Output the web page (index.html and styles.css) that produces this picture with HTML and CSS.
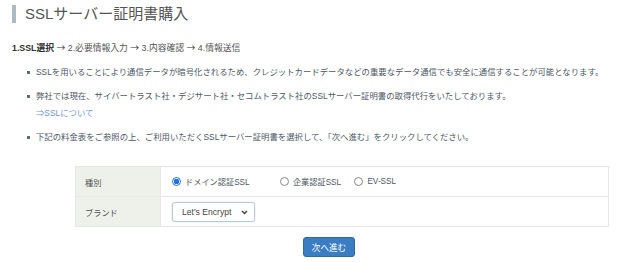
FILE: index.html
```html
<!DOCTYPE html>
<html lang="ja">
<head>
<meta charset="UTF-8">
<title>SSLサーバー証明書購入</title>
<link rel="stylesheet" href="styles.css">
</head>
<body>
<div id="wrap">
    <h1 class="ttl">SSLサーバー証明書購入</h1>
    <p class="steps"><b>1.SSL選択</b> <span class="arr">→</span> 2.必要情報入力 <span class="arr">→</span> 3.内容確認 <span class="arr">→</span> 4.情報送信</p>
    <ul class="notes">
        <li>SSLを用いることにより通信データが暗号化されるため、クレジットカードデータなどの重要なデータ通信でも安全に通信することが可能となります。</li>
        <li>弊社では現在、サイバートラスト社・デジサート社・セコムトラスト社のSSLサーバー証明書の取得代行をいたしております。<br><a href="#">⇒SSLについて</a></li>
        <li>下記の料金表をご参照の上、ご利用いただくSSLサーバー証明書を選択して、「次へ進む」をクリックしてください。</li>
    </ul>
    <table class="form">
        <tr>
            <th>種別</th>
            <td>
                <label class="rd"><input type="radio" name="kind" checked><span class="mark"></span>ドメイン認証SSL</label>
                <label class="rd"><input type="radio" name="kind"><span class="mark"></span>企業認証SSL</label>
                <label class="rd"><input type="radio" name="kind"><span class="mark"></span>EV-SSL</label>
            </td>
        </tr>
        <tr>
            <th>ブランド</th>
            <td>
                <span class="sel">
                    <select>
                        <option>Let's Encrypt</option>
                    </select>
                    <svg class="chev" width="7" height="5" viewBox="0 0 7 5"><path d="M1 1 L3.5 3.5 L6 1" fill="none" stroke="#444" stroke-width="1.4"/></svg>
                </span>
            </td>
        </tr>
    </table>
    <div class="actions">
        <button class="btn" type="button">次へ進む</button>
    </div>
</div>
</body>
</html>
```
FILE: styles.css
```css
body{margin:0; font-family:"Liberation Sans","Noto Sans CJK JP",sans-serif; color:#4d5866; background:#fff;}
#wrap{padding:5px 0 0 12px;}
.ttl{margin:0; height:18px; line-height:18px; border-left:4px solid #a8bcc2; padding-left:9px; font-size:15px; font-weight:normal; color:#555;}
.steps{margin:18px 0 0 0; font-size:8.8px; line-height:14px; color:#555;}
.steps b{color:#333;}
.steps .arr{font-family:"Noto Sans CJK JP",sans-serif; color:#333;}
.notes{list-style:none; margin:9px 0 0 0; padding:0 0 0 24px; font-size:8.4px; line-height:17px;}
.notes li{position:relative; margin-bottom:7px;}
.notes li::before{content:""; position:absolute; left:-9px; top:7px; width:3px; height:3px; background:#5b6a80;}
.notes a{color:#6a98d6; text-decoration:none;}
.form{margin:20px 0 0 63px; width:534px; border-collapse:collapse; font-size:8.2px;}
.form th,.form td{border:1px solid #e6e8e6; height:29px; padding:0; vertical-align:middle;}
.form tr{height:30px;}
.form th{width:75px; padding-left:9px; text-align:left; font-weight:normal; background:#eef0ea; color:#555;}
.form td{padding-left:11px;}
.rd{display:inline-flex; align-items:center; margin-right:11px; color:#4d5866;}
.rd:first-child{margin-right:28px;}
.rd input{display:none;}
.rd .mark{width:7px; height:7px; border:1px solid #888; border-radius:50%; margin-right:4px; box-sizing:content-box;}
.rd input:checked + .mark{border-color:#1a73e8; background:radial-gradient(circle,#1a73e8 0 2.6px,#fff 3px);}
.sel{position:relative; display:inline-block;}
.sel select{appearance:none; -webkit-appearance:none; width:83px; height:20px; padding:0 0 0 9px; border:1px solid #b9c9d9; border-radius:3px; background:#fff; font-family:inherit; font-size:8.6px; color:#444; box-shadow:0 0 2px rgba(120,160,200,0.35);}
.chev{position:absolute; right:7px; top:8px;}
.actions{padding:10px 0 0 291px;}
.btn{width:52px; height:20px; border:1px solid #2c6aa8; border-radius:3px; background:#3a7dc2; color:#fff; font-family:inherit; font-size:8.6px; padding:0;}
```
